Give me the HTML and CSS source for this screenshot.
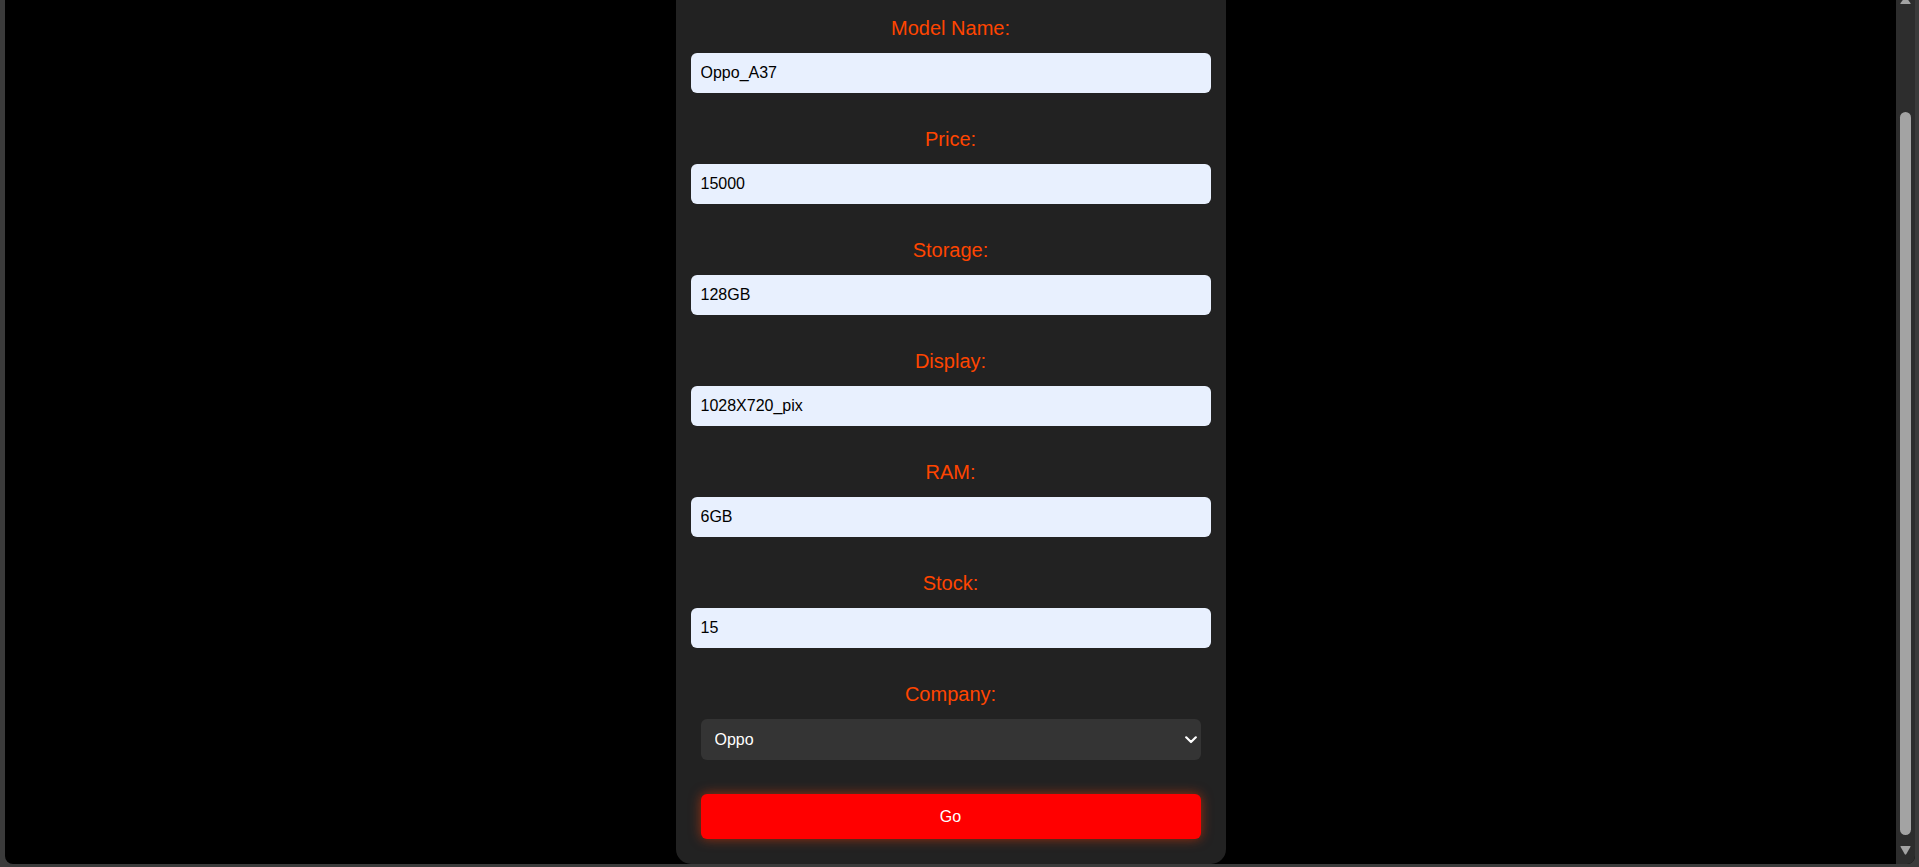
FILE: index.html
```html
<!DOCTYPE html>
<html lang="en">
<head>
<meta charset="utf-8">
<title>Edit Mobile</title>
<link rel="stylesheet" href="styles.css">
</head>
<body>
<div class="window">
  <div class="viewport">
    <main class="page">
      <form class="card">
        <div class="field">
          <label class="label" for="model">Model Name:</label>
          <input class="input" id="model" type="text" value="Oppo_A37">
        </div>
        <div class="field">
          <label class="label" for="price">Price:</label>
          <input class="input" id="price" type="text" value="15000">
        </div>
        <div class="field">
          <label class="label" for="storage">Storage:</label>
          <input class="input" id="storage" type="text" value="128GB">
        </div>
        <div class="field">
          <label class="label" for="display">Display:</label>
          <input class="input" id="display" type="text" value="1028X720_pix">
        </div>
        <div class="field">
          <label class="label" for="ram">RAM:</label>
          <input class="input" id="ram" type="text" value="6GB">
        </div>
        <div class="field">
          <label class="label" for="stock">Stock:</label>
          <input class="input" id="stock" type="text" value="15">
        </div>
        <div class="field">
          <label class="label" for="company">Company:</label>
          <div class="select-wrap">
            <select class="select" id="company">
              <option selected>Oppo</option>
              <option>Samsung</option>
              <option>Vivo</option>
              <option>Apple</option>
            </select>
            <svg class="chevron" width="12" height="8" viewBox="0 0 12 8"><path d="M1.2 1.3 L6 6 L10.8 1.3" fill="none" stroke="#fff" stroke-width="2.2" stroke-linecap="round" stroke-linejoin="round"/></svg>
          </div>
        </div>
        <button class="go" type="button">Go</button>
      </form>
    </main>
    <div class="scrollbar">
      <svg class="arrow arrow-up" width="11" height="8" viewBox="0 0 11 8"><path d="M5.5 0.5 L10.6 7.2 Q10.8 8 10 8 L1 8 Q0.2 8 0.4 7.2 Z" fill="#a3a3a3"/></svg>
      <span class="thumb"></span>
      <svg class="arrow arrow-down" width="11" height="9" viewBox="0 0 11 9"><path d="M1 0 L10 0 Q10.8 0 10.5 0.8 L6.2 8.3 Q5.5 9 4.8 8.3 L0.5 0.8 Q0.2 0 1 0 Z" fill="#a3a3a3"/></svg>
    </div>
  </div>
</div>
</body>
</html>
```

FILE: styles.css
```css
html, body {
  margin: 0;
  padding: 0;
  height: 100%;
  overflow: hidden;
}

body {
  background: #3b3b3b;
  font-family: "Liberation Sans", Arial, sans-serif;
}

.window {
  box-sizing: border-box;
  height: 867px;
  padding: 0 4px 3px 5px;
  display: flex;
}

.viewport {
  flex: 1;
  display: flex;
  background: #000;
  border-radius: 0 0 8px 8px;
  overflow: hidden;
}

.page {
  flex: 1;
  display: flex;
  justify-content: center;
  align-items: flex-start;
}

.card {
  box-sizing: border-box;
  width: 550px;
  padding: 16px 15px 25px;
  background: #222;
  border-radius: 0 0 15px 15px;
  display: flex;
  flex-direction: column;
  gap: 34px;
}

.field {
  display: flex;
  flex-direction: column;
  gap: 13px;
}

.label {
  display: block;
  padding-top: 1px;
  text-align: center;
  color: #ff4500;
  font-size: 20px;
  line-height: 23px;
}

.input {
  box-sizing: border-box;
  width: 100%;
  height: 40px;
  margin: 0;
  padding: 0 10px;
  border: none;
  border-radius: 6px;
  background: #e8f0fe;
  color: #000;
  font-family: "Liberation Sans", Arial, sans-serif;
  font-size: 16px;
  outline: none;
}

.select-wrap {
  position: relative;
  margin: 0 10px;
}

.select {
  box-sizing: border-box;
  display: block;
  width: 100%;
  height: 41px;
  margin: 0;
  padding: 0 30px 0 14px;
  border: none;
  border-radius: 6px;
  background: #343434;
  color: #fff;
  font-family: "Liberation Sans", Arial, sans-serif;
  font-size: 16px;
  -webkit-appearance: none;
  appearance: none;
  outline: none;
}

.chevron {
  position: absolute;
  right: 4px;
  top: 17px;
  pointer-events: none;
}

.go {
  box-sizing: border-box;
  height: 45px;
  margin: 0 10px;
  border: none;
  border-radius: 6px;
  background: #ff0000;
  color: #fff;
  font-family: "Liberation Sans", Arial, sans-serif;
  font-size: 16px;
  box-shadow: 0 0 12px rgba(255, 60, 0, 0.55);
  cursor: pointer;
}

.scrollbar {
  width: 19px;
  box-sizing: border-box;
  padding: 0 4px;
  background: #2d2d2d;
  display: flex;
  flex-direction: column;
}

.arrow {
  display: block;
  flex: none;
}

.arrow-up {
  margin-top: -4px;
}

.thumb {
  display: block;
  flex: none;
  margin-top: 108px;
  height: 723px;
  border-radius: 6px;
  background: #a3a3a3;
}

.arrow-down {
  margin-top: 11px;
}
```
